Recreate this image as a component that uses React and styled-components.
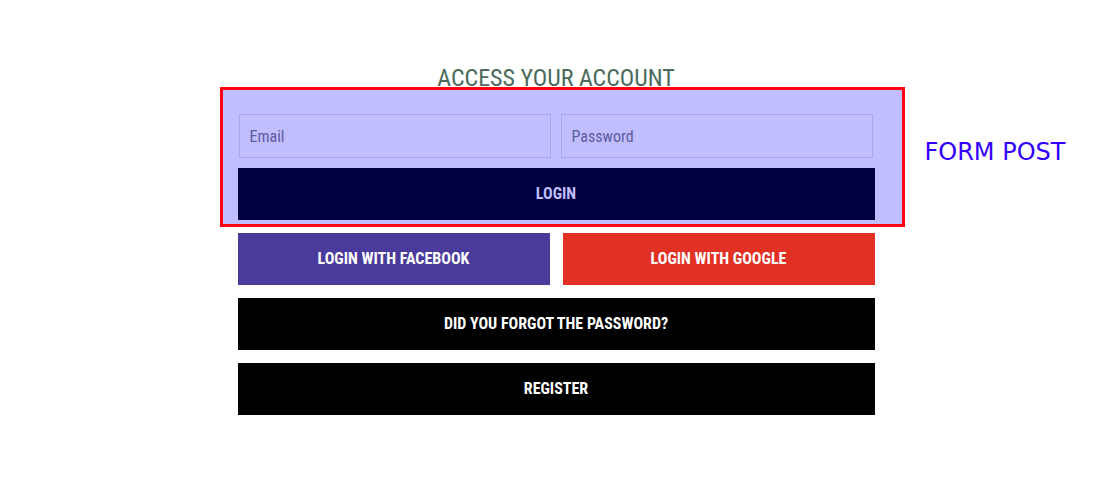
import styled, { createGlobalStyle } from 'styled-components';

const GlobalStyle = createGlobalStyle`
  body {
    margin: 0;
    background: #ffffff;
    font-family: "Roboto Condensed", "Liberation Sans Narrow", Roboto, sans-serif;
    font-stretch: condensed;
  }
`;

const Page = styled.div`
  padding-top: 69px;
`;

const Column = styled.div`
  width: 637px;
  margin: 0 auto;
  display: flex;
  flex-direction: column;
`;

const Title = styled.h2`
  margin: 0;
  font-size: 24px;
  line-height: 18px;
  font-weight: 400;
  text-align: center;
  color: #4b6a5b;
`;

const FormBox = styled.form`
  position: relative;
  margin: 0 -30px 0 -18px;
  padding: 24px 29px 4px 16px;
  border: 3px solid #ff0012;
  background: #c0befe;
`;

const FormNote = styled.span`
  position: absolute;
  left: calc(100% + 23px);
  top: 48px;
  white-space: nowrap;
  font-family: "DejaVu Sans", sans-serif;
  font-stretch: normal;
  font-size: 24px;
  color: #3300ff;
`;

const InputRow = styled.div`
  display: grid;
  grid-template-columns: 1fr 1fr;
  gap: 10px;
`;

const Field = styled.input`
  box-sizing: border-box;
  height: 44px;
  padding: 0 10px;
  border: 1px solid #a9a7e8;
  background: transparent;
  font-family: inherit;
  font-stretch: condensed;
  font-size: 16px;
  color: #2a2870;
  outline: none;

  &::placeholder {
    color: #5e5c9e;
  }
`;

const Button = styled.button`
  display: block;
  width: 100%;
  height: 52px;
  border: none;
  padding: 0 0 2px;
  background: ${(p) => p.$bg};
  color: ${(p) => p.$fg || '#ffffff'};
  font-family: inherit;
  font-stretch: condensed;
  font-size: 16px;
  font-weight: 700;
  text-transform: uppercase;
  cursor: pointer;
`;

const LoginButton = styled(Button)`
  width: calc(100% + 3px);
  margin: 10px 0 0 -1px;
`;

const Actions = styled.div`
  margin-top: 6px;
  display: flex;
  flex-direction: column;
  gap: 13px;
`;

const SocialRow = styled.div`
  display: grid;
  grid-template-columns: 1fr 1fr;
  gap: 13px;
`;

export default function App() {
  return (
    <Page>
      <GlobalStyle />
      <Column>
        <Title>ACCESS YOUR ACCOUNT</Title>
        <FormBox onSubmit={(e) => e.preventDefault()}>
          <InputRow>
            <Field type="email" placeholder="Email" />
            <Field type="password" placeholder="Password" />
          </InputRow>
          <LoginButton type="submit" $bg="#00003f" $fg="#c0befe">
            Login
          </LoginButton>
          <FormNote>FORM POST</FormNote>
        </FormBox>
        <Actions>
          <SocialRow>
            <Button $bg="#4a3a9b">Login with Facebook</Button>
            <Button $bg="#e13024">Login with Google</Button>
          </SocialRow>
          <Button $bg="#000000">Did you forgot the password?</Button>
          <Button $bg="#000000">Register</Button>
        </Actions>
      </Column>
    </Page>
  );
}
